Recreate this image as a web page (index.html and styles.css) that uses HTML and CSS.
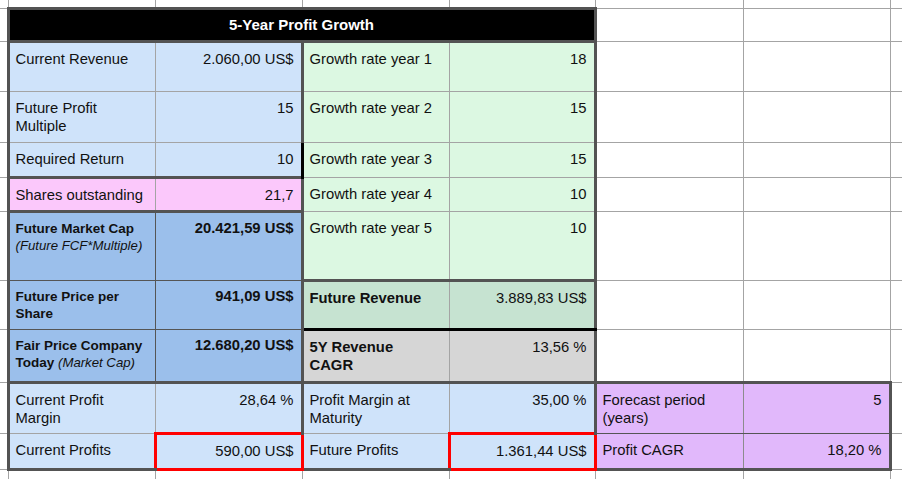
FILE: index.html
```html
<!DOCTYPE html>
<html>
<head>
<meta charset="utf-8">
<link rel="stylesheet" href="styles.css">
</head>
<body>
<table class="sheet">
  <colgroup>
    <col class="w0"><col class="w1"><col class="w2"><col class="w3"><col class="w4"><col class="w5"><col class="w6"><col class="w7">
  </colgroup>
  <tr class="h0"><td class="e0 t0"></td><td class="t0"></td><td class="t0"></td><td class="t0"></td><td class="t0"></td><td class="t0"></td><td class="t0"></td><td class="t0 e7"></td></tr>
  <tr class="hh"><td class="e0"></td><td colspan="4" class="title">5-Year Profit Growth</td><td></td><td></td><td class="e7"></td></tr>
  <tr class="r1">
    <td class="e0"></td>
    <td class="c lb L">Current Revenue</td>
    <td class="c v lb R">2.060,00 US$</td>
    <td class="c gr L">Growth rate year 1</td>
    <td class="c v gr R">18</td>
    <td></td><td></td><td class="e7"></td>
  </tr>
  <tr class="r2">
    <td class="e0"></td>
    <td class="c lb L">Future Profit<br>Multiple</td>
    <td class="c v lb R">15</td>
    <td class="c gr L">Growth rate year 2</td>
    <td class="c v gr R">15</td>
    <td></td><td></td><td class="e7"></td>
  </tr>
  <tr class="r3">
    <td class="e0"></td>
    <td class="c lb L">Required Return</td>
    <td class="c v lb KR">10</td>
    <td class="c gr KL">Growth rate year 3</td>
    <td class="c v gr R">15</td>
    <td></td><td></td><td class="e7"></td>
  </tr>
  <tr class="r4">
    <td class="e0"></td>
    <td class="c pk L T B">Shares outstanding</td>
    <td class="c v pk R T B">21,7</td>
    <td class="c gr L">Growth rate year 4</td>
    <td class="c v gr R">10</td>
    <td></td><td></td><td class="e7"></td>
  </tr>
  <tr class="r5">
    <td class="e0"></td>
    <td class="c cs db dk L T"><span class="sm">Future Market Cap</span><br><span class="it">(Future FCF*Multiple)</span></td>
    <td class="c cs v db dk R T bold">20.421,59 US$</td>
    <td class="c gr L B">Growth rate year 5</td>
    <td class="c v gr R B">10</td>
    <td></td><td></td><td class="e7"></td>
  </tr>
  <tr class="r6">
    <td class="e0"></td>
    <td class="c cs db dk L"><span class="sm">Future Price per<br>Share</span></td>
    <td class="c cs v db dk R bold">941,09 US$</td>
    <td class="c mt L T KB bold">Future Revenue</td>
    <td class="c v mt R T KB">3.889,83 US$</td>
    <td></td><td></td><td class="e7"></td>
  </tr>
  <tr class="r7">
    <td class="e0"></td>
    <td class="c cs db dk L B"><span class="sm">Fair Price Company<br>Today <span class="it">(Market Cap)</span></span></td>
    <td class="c cs v db dk R B bold">12.680,20 US$</td>
    <td class="c gy L KT B bold">5Y Revenue<br>CAGR</td>
    <td class="c v gy R KT B">13,56 %</td>
    <td></td><td></td><td class="e7"></td>
  </tr>
  <tr class="r8">
    <td class="e0"></td>
    <td class="c lb L T">Current Profit<br>Margin</td>
    <td class="c v lb R T">28,64 %</td>
    <td class="c lb L T">Profit Margin at<br>Maturity</td>
    <td class="c v lb R T">35,00 %</td>
    <td class="c pu pr L T">Forecast period<br>(years)</td>
    <td class="c v pu pl R T">5</td>
    <td class="e7"></td>
  </tr>
  <tr class="r9">
    <td class="e0"></td>
    <td class="c lb L B">Current Profits</td>
    <td class="c v lb red">590,00 US$</td>
    <td class="c lb RL B">Future Profits</td>
    <td class="c v lb red">1.361,44 US$</td>
    <td class="c pu pr RL B">Profit CAGR</td>
    <td class="c v pu pl R B">18,20 %</td>
    <td class="e7"></td>
  </tr>
  <tr class="r10"><td class="e0"></td><td></td><td></td><td></td><td></td><td></td><td></td><td class="e7"></td></tr>
</table>
</body>
</html>
```

FILE: styles.css
```css
html, body {
  margin: 0;
  padding: 0;
  background: #ffffff;
  overflow: hidden;
}

body {
  font-family: "Liberation Sans", Arial, Helvetica, sans-serif;
  font-size: 14.8px;
  line-height: 18px;
  color: #111111;
}

.sheet {
  border-collapse: collapse;
  table-layout: fixed;
  width: 902px;
}

.w0 { width: 8px; }
.w1 { width: 147px; }
.w2 { width: 147px; }
.w3 { width: 147px; }
.w4 { width: 146px; }
.w5 { width: 148px; }
.w6 { width: 147px; }
.w7 { width: 12px; }

.h0 { height: 8px; }
.hh { height: 33px; }
.r1 { height: 50px; }
.r2 { height: 51px; }
.r3 { height: 35px; }
.r4 { height: 34px; }
.r5 { height: 69px; }
.r6 { height: 49px; }
.r7 { height: 53px; }
.r8 { height: 51px; }
.r9 { height: 36px; }
.r10 { height: 12px; }

td {
  border: 1px solid #a4a4a4;
  padding: 0;
  vertical-align: top;
  overflow: hidden;
}

.e0 { border-left: none; }
.e7 { border-right: none; }
.t0 { border-top: none; }

.c {
  padding: 7px 7px 0 6px;
  white-space: nowrap;
}

.cs {
  padding-top: 7px;
  line-height: 17.5px;
}

.v { text-align: right; }
.bold { font-weight: bold; }

.title {
  background: #000000;
  color: #ffffff;
  font-weight: bold;
  font-size: 15px;
  text-align: center;
  vertical-align: middle;
  border: 3px solid #535353;
}

/* fills */
.lb { background: #cfe3fa; }
.db { background: #9bbfeb; }
.gr { background: #dcf8e2; }
.mt { background: #c6e3d1; }
.gy { background: #d6d6d6; }
.pk { background: #fbc8fb; }
.pu { background: #e1b8fb; }

/* thin dark borders */
.dk { border: 1px solid #555555; }
.pu { border: 1px solid #555555; }
.pr { border-right-color: #8c8c8c; }
.pl { border-left-color: #8c8c8c; }

/* thick dark borders */
.T { border-top: 3px solid #535353; }
.B { border-bottom: 3px solid #535353; }
.L { border-left: 3px solid #535353; }
.R { border-right: 3px solid #535353; }

/* black borders */
.KR { border-right: 3px solid #000000; }
.KL { border-left: 3px solid #000000; }
.KB { border-bottom: 3px solid #000000; }
.KT { border-top: 3px solid #000000; }

/* red highlight */
.red { border: 3px solid #ff0000; }
.RL { border-left: 3px solid #ff0000; }

.sm {
  font-weight: bold;
  font-size: 13.5px;
  line-height: 16px;
}

.it {
  font-style: italic;
  font-weight: normal;
  font-size: 13.2px;
}
```
